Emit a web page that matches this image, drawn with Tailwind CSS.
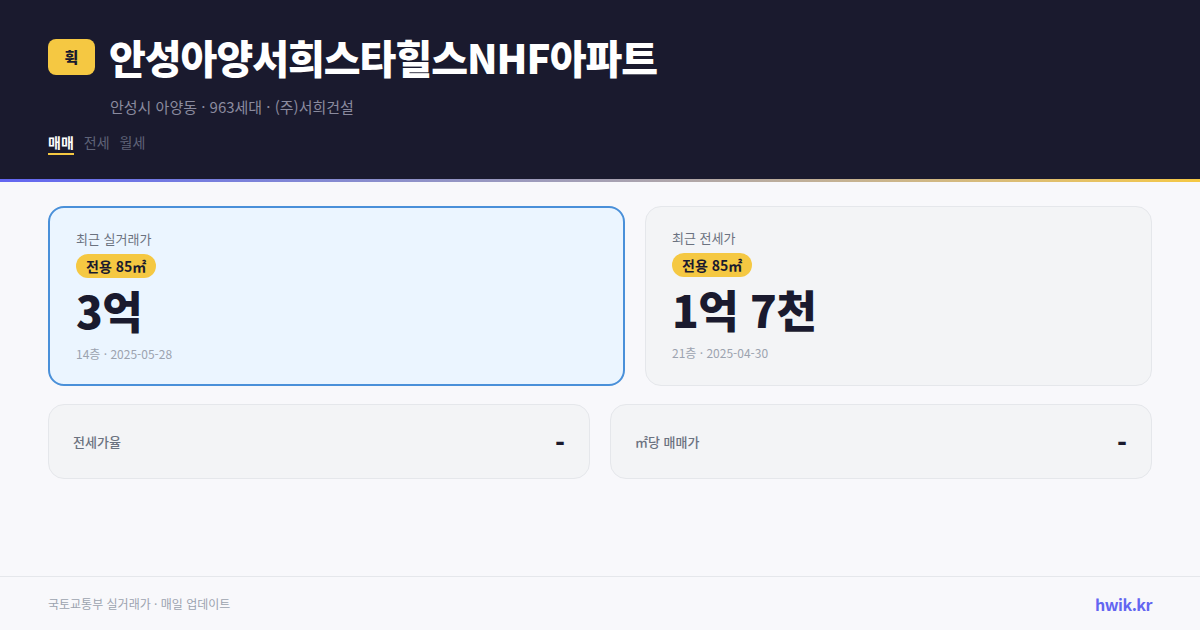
<!DOCTYPE html>
<html lang="ko">
<head>
  <meta charset="UTF-8" />
  <title>안성아양서희스타힐스NHF아파트</title>
  <script src="https://cdn.jsdelivr.net/npm/@tailwindcss/browser@4"></script>
</head>
<body class="w-[1200px] h-[630px] overflow-hidden bg-[#f8f8fb] flex flex-col font-['Noto_Sans_CJK_KR','Noto_Sans',sans-serif]">

  <!-- 헤더 -->
  <header class="h-[179px] bg-[#1a1a2e] px-12 pt-[39px]">
    <div class="flex items-center h-9">
      <div class="w-[47px] h-9 rounded-lg bg-[#f5c842] text-[#1a1a2e] text-[15px] font-black flex items-center justify-center">휙</div>
      <h1 class="ml-[14px] text-[40px] leading-9 font-black text-white tracking-[-1px] whitespace-nowrap">안성아양서희스타힐스NHF아파트</h1>
    </div>
    <p class="mt-[21px] ml-[62px] text-[15px] leading-[22px] text-[#8a8a9e]">안성시 아양동 · 963세대 · (주)서희건설</p>
    <nav class="mt-[14px] flex gap-2.5 text-sm leading-5">
      <span class="text-white font-bold border-b-2 border-[#f5c842] pb-px">매매</span>
      <span class="text-[#5f6378]">전세</span>
      <span class="text-[#5f6378]">월세</span>
    </nav>
  </header>
  <div class="h-[3px] bg-gradient-to-r from-[#6366f1] to-[#f5c842]"></div>

  <!-- 본문 -->
  <main class="flex-1 px-12 pt-[24px]">
    <div class="grid grid-cols-[577px_507px] gap-5">
      <div class="h-[180px] rounded-2xl border-2 border-[#4a90d9] bg-[#ebf5ff] px-[26px] pt-[21px]">
        <p class="text-[13px] leading-[19px] text-[#6b7280]">최근 실거래가</p>
        <span class="mt-[6px] inline-flex h-6 items-center rounded-full bg-[#f5c842] px-2.5 text-sm font-bold text-[#1a1a2e]">전용 85㎡</span>
        <p class="mt-[2px] text-[44px] leading-[60px] font-black tracking-[-0.5px] text-[#1a1a2e]">3억</p>
        <p class="mt-[5px] text-xs leading-[18px] text-[#9ca3af]">14층 · 2025-05-28</p>
      </div>
      <div class="h-[180px] rounded-2xl border border-[#e5e7eb] bg-[#f3f4f6] px-[26px] pt-[21px]">
        <p class="text-[13px] leading-[19px] text-[#6b7280]">최근 전세가</p>
        <span class="mt-[6px] inline-flex h-6 items-center rounded-full bg-[#f5c842] px-2.5 text-sm font-bold text-[#1a1a2e]">전용 85㎡</span>
        <p class="mt-[2px] text-[44px] leading-[60px] font-black tracking-[-0.5px] text-[#1a1a2e]">1억 7천</p>
        <p class="mt-[5px] text-xs leading-[18px] text-[#9ca3af]">21층 · 2025-04-30</p>
      </div>
    </div>
    <div class="mt-[18px] grid grid-cols-2 gap-5">
      <div class="h-[75px] rounded-2xl border border-[#e5e7eb] bg-[#f3f4f6] px-6 flex items-center justify-between">
        <span class="text-[13px] font-medium text-[#6b7280]">전세가율</span>
        <span class="text-[26px] font-black text-[#1a1a2e]">-</span>
      </div>
      <div class="h-[75px] rounded-2xl border border-[#e5e7eb] bg-[#f3f4f6] px-6 flex items-center justify-between">
        <span class="text-[13px] font-medium text-[#6b7280]">㎡당 매매가</span>
        <span class="text-[26px] font-black text-[#1a1a2e]">-</span>
      </div>
    </div>
  </main>

  <!-- 푸터 -->
  <footer class="h-[54px] border-t border-[#e5e7eb] px-12 flex items-center justify-between">
    <span class="text-xs text-[#9ca3af]">국토교통부 실거래가 · 매일 업데이트</span>
    <span class="text-base font-bold tracking-[-0.5px] text-[#6366f1]">hwik.kr</span>
  </footer>

</body>
</html>
